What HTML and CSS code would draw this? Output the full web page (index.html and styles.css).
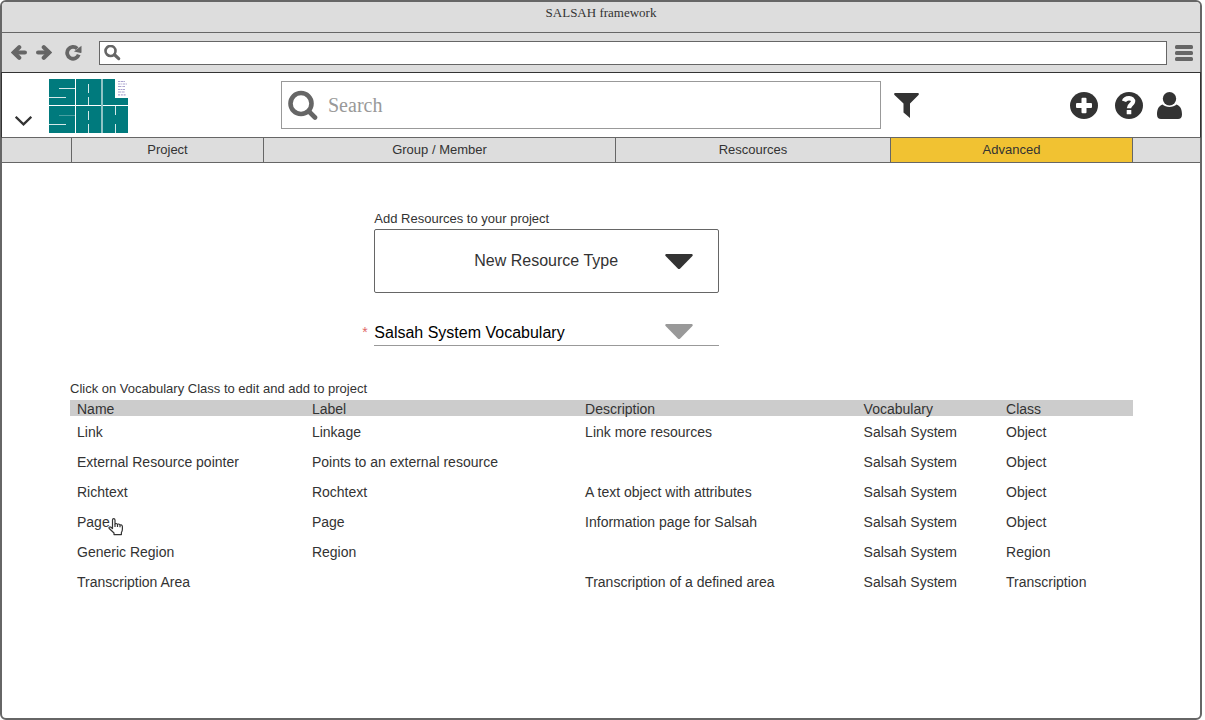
FILE: index.html
```html
<!DOCTYPE html>
<html lang="en">
<head>
<meta charset="utf-8">
<meta name="viewport" content="width=device-width, initial-scale=1">
<title>SALSAH framework</title>
<link rel="stylesheet" href="styles.css">
</head>
<body>
<div class="window">
  <div class="titlebar">SALSAH framework</div>

  <div class="toolbar">
    <button class="icon-button" type="button" aria-label="Back">
      <svg width="16" height="16" viewBox="0 0 16 16" fill="none" stroke="#666" stroke-width="4.200" stroke-linecap="round"><path d="M3.500 7.500H13.900"/><path d="M8.200 2.300 2.800 7.500l5.400 5.200"/></svg>
    </button>
    <button class="icon-button" type="button" aria-label="Forward">
      <svg width="16" height="16" viewBox="0 0 16 16" fill="none" stroke="#666" stroke-width="4.200" stroke-linecap="round"><path d="M12.500 7.500H2.100"/><path d="M7.800 2.300l5.400 5.200-5.400 5.200"/></svg>
    </button>
    <button class="icon-button reload" type="button" aria-label="Reload">
      <svg width="17" height="16" viewBox="0 0 17 16"><path d="M12.200 3.600A5.900 5.900 0 1 0 13.700 9.600" fill="none" stroke="#666" stroke-width="3.800"/><path d="M16.500.800v6.500q0 .7-.8.600L9 6.400z" fill="#666"/></svg>
    </button>
    <label class="address">
      <svg width="17" height="16" viewBox="0 0 17 16" fill="none" stroke="#666"><circle cx="6.500" cy="6" r="5" stroke-width="2.600"/><path d="M10.500 9.800l4.200 3.800" stroke-width="3.200" stroke-linecap="round"/></svg>
      <input class="address-input" type="text" aria-label="Address">
    </label>
    <button class="icon-button" type="button" aria-label="Browser menu">
      <svg width="18" height="16" viewBox="0 0 18 16" fill="#666"><rect width="18" height="4" rx="1.500"/><rect y="6" width="18" height="4" rx="1.500"/><rect y="12" width="18" height="4" rx="1.500"/></svg>
    </button>
  </div>

  <header class="header">
    <button class="icon-button expand" type="button" aria-label="Expand">
      <svg width="17" height="10" viewBox="0 0 17 10" fill="none" stroke="#333" stroke-width="2.300"><path d="M.7.800l7.800 7.500L16.300.800"/></svg>
    </button>
    <a class="logo" href="#" aria-label="SALSAH">
      <svg width="79" height="54" viewBox="0 0 79 54">
        <path fill="#007a7d" d="M0 0h66v19h13v35H0z"/>
        <g fill="#fff">
          <rect y="26" width="79" height="1"/>
          <rect x="26" width="1" height="54"/>
        </g>
        <g fill="#d5e9e9">
          <rect x="10" y="9" width="16" height="1"/>
          <rect y="18" width="17" height="1"/>
          <rect y="45" width="17" height="1"/>
          <rect x="39" y="5" width="1" height="9"/>
          <rect x="39" y="18" width="1" height="8"/>
          <rect x="39" y="32" width="1" height="9"/>
          <rect x="39" y="45" width="1" height="9"/>
          <rect x="66" y="27" width="1" height="9"/>
          <rect x="66" y="45" width="1" height="9"/>
        </g>
        <g fill="#8fc4c5">
          <rect x="52" width="2" height="54"/>
          <rect x="10" y="36" width="16" height="1" opacity=".5"/>
        </g>
        <g fill="none" stroke="#aaa3cf" stroke-width="1.200">
          <path d="M69 2.500h7" stroke-dasharray="2 .6 3 .5"/>
          <path d="M69 5h9" stroke-dasharray="2.500 .7 1 .7"/>
          <path d="M69 7.500h7" stroke-dasharray="3 .6 1 .5"/>
          <path d="M69 10.500h7" stroke-dasharray="2 .5"/>
          <path d="M69 13h7" stroke-dasharray="3 .6"/>
          <path d="M69 15.800h8" stroke-dasharray="2 .8"/>
        </g>
      </svg>
    </a>
    <label class="search">
      <svg width="31" height="30" viewBox="0 0 31 30" fill="none" stroke="#666"><circle cx="13" cy="13.500" r="10.500" stroke-width="4.600"/><path d="M21 21.500l6 6" stroke-width="4.600" stroke-linecap="round"/></svg>
      <input class="search-input" type="search" placeholder="Search" aria-label="Search">
    </label>
    <button class="icon-button filter" type="button" aria-label="Filter">
      <svg width="25" height="26" viewBox="0 0 25 26" fill="#333"><path d="M.8 1h23.400q1.200.8.300 2L16 11.500V26l-6.500-5.500v-9L.500 3Q-.4 1.800.800 1z"/></svg>
    </button>
    <button class="icon-button add" type="button" aria-label="Add">
      <svg width="28" height="27" viewBox="0 0 28 27"><ellipse cx="14" cy="13.500" rx="14" ry="13.500" fill="#333"/><g fill="#fff"><rect x="11.500" y="5.700" width="5" height="15.600" rx="1"/><rect x="6" y="11" width="16" height="5" rx="1"/></g></svg>
    </button>
    <button class="icon-button help" type="button" aria-label="Help">
      <svg width="28" height="27" viewBox="0 0 28 27"><ellipse cx="14" cy="13.500" rx="14" ry="13.500" fill="#333"/><path d="M9 9.300C10.500 5 18.600 5.200 18 9.800 17.600 12.500 14 12.600 14 16.300" stroke="#fff" stroke-width="4.400" fill="none"/><rect x="11.700" y="18" width="4.600" height="4.300" rx=".5" fill="#fff"/></svg>
    </button>
    <button class="icon-button" type="button" aria-label="Account">
      <svg width="26" height="27" viewBox="0 0 26 27" fill="#333"><circle cx="13.500" cy="6.700" r="6.700"/><path d="M6.500 12.500C9.700 15.800 17.300 15.800 20.500 12.500 25 14 26 18.500 26 22.500 26 25.500 24.500 27 22 27H5c-2.500 0-4-1.500-4-4.500C1 18.500 2 14 6.500 12.500z"/></svg>
    </button>
  </header>

  <nav class="tabs" aria-label="Main">
    <span class="tab"></span>
    <a class="tab" href="#">Project</a>
    <a class="tab" href="#">Group / Member</a>
    <a class="tab" href="#">Rescources</a>
    <a class="tab active" href="#" aria-current="page">Advanced</a>
    <span class="tab"></span>
  </nav>

  <main class="content">
    <form class="form">
      <label class="form-label" for="type">Add Resources to your project</label>
      <div class="picker">
        <select class="select boxed" id="type"><option>New Resource Type</option></select>
        <svg class="arrow" width="28" height="16" viewBox="0 0 28 16" fill="#333"><path d="M1.200 1h25.600q1.600.7.600 2L15.200 15.500q-1.200 1-2.400 0L.600 3Q-.4 1.700 1.200 1z"/></svg>
      </div>
      <label class="required" for="vocabulary" aria-label="Vocabulary, required">*</label>
      <div class="picker">
        <select class="select underlined" id="vocabulary"><option>Salsah System Vocabulary</option></select>
        <svg class="arrow" width="28" height="17" viewBox="0 0 28 17" fill="#999"><path d="M1.200 0h25.600q1.600.7.600 2L15.200 14.500q-1.200 1-2.400 0L.600 2Q-.4.700 1.200 0z"/></svg>
      </div>
    </form>

    <table class="classes">
      <caption>Click on Vocabulary Class to edit and add to project</caption>
      <colgroup><col class="col-name"><col class="col-label"><col class="col-description"><col class="col-vocabulary"><col></colgroup>
      <thead>
        <tr><th scope="col">Name</th><th scope="col">Label</th><th scope="col">Description</th><th scope="col">Vocabulary</th><th scope="col">Class</th></tr>
      </thead>
      <tbody>
        <tr><td>Link</td><td>Linkage</td><td>Link more resources</td><td>Salsah System</td><td>Object</td></tr>
        <tr><td>External Resource pointer</td><td>Points to an external resource</td><td></td><td>Salsah System</td><td>Object</td></tr>
        <tr><td>Richtext</td><td>Rochtext</td><td>A text object with attributes</td><td>Salsah System</td><td>Object</td></tr>
        <tr><td><span class="pointed">Page<svg class="cursor" width="16" height="18" viewBox="0 0 16 18" fill="#fff" stroke="#333" stroke-width="1.200" stroke-linejoin="round"><path d="M4.500 10.500V2q0-1.300 1.200-1.300T7 2v4.500q.2-1 1.200-1t1.300 1.200q.2-.8 1.200-.7t1.300 1.200q.2-.6 1.200-.4T14.400 8.500V11q0 2-1 3.500V16.600H6V15L1.500 10.800Q.6 9.700 1.300 9.100T3 9.200z"/><path d="M7 6.500v2.500M9.500 6.700v2.300M12 7.200v2"/></svg></span></td><td>Page</td><td>Information page for Salsah</td><td>Salsah System</td><td>Object</td></tr>
        <tr><td>Generic Region</td><td>Region</td><td></td><td>Salsah System</td><td>Region</td></tr>
        <tr><td>Transcription Area</td><td></td><td>Transcription of a defined area</td><td>Salsah System</td><td>Transcription</td></tr>
      </tbody>
    </table>
  </main>
</div>
</body>
</html>
```
FILE: styles.css
```css
* { box-sizing: border-box; }

body {
  margin: 0;
  background: #fff;
  color: #333;
  font: 14px/16px "Liberation Sans", Arial, sans-serif;
}

svg { display: block; flex: none; }

.window {
  display: flex;
  flex-direction: column;
  min-height: 100vh;
  margin-right: 3px;
  border: 2px solid #666;
  border-radius: 6px;
}

.titlebar {
  padding: 3px 0 11px;
  border-bottom: 1px solid #666;
  border-radius: 4px 4px 0 0;
  background: #ddd;
  font: 13px/16px "Liberation Serif", "Times New Roman", serif;
  text-align: center;
}

.icon-button {
  flex: none;
  padding: 0;
  border: 0;
  background: none;
}

.toolbar {
  display: flex;
  align-items: center;
  gap: 9px;
  padding: 8px 7px 7px 9px;
  background: #ddd;
}

.reload { margin-left: 4px; }

.address {
  display: flex;
  flex: 1;
  height: 24px;
  margin: 0 -1px 0 8px;
  padding: 3px 4px;
  border: 1px solid #666;
  background: #fff;
}

.address-input,
.search-input {
  flex: 1;
  min-width: 0;
  padding: 0;
  border: 0;
  outline: 0;
  background: none;
}

.header {
  display: flex;
  align-items: center;
  margin: 0 -1px;
  padding: 0 18px 0 13px;
  border: 1px solid #333;
  border-bottom-color: #666;
  background: #fff;
}

.expand { align-self: flex-end; margin-bottom: 11px; }

.logo { margin: 6px 0 4px 17px; }

.search {
  display: flex;
  align-items: center;
  flex: 1;
  gap: 9px;
  height: 48px;
  margin-left: 153px;
  padding: 0 6px;
  border: 1px solid #999;
}

.search-input {
  font: 20px/24px "Liberation Serif", "Times New Roman", serif;
}

.search-input::placeholder { color: #999; opacity: 1; }

.filter { margin-left: 13px; }
.add { margin-left: 151px; }
.help { margin: 0 13px 0 17px; }

.tabs {
  display: grid;
  grid-template-columns: 70fr 192fr 352fr 275fr 242fr 67fr;
  border-bottom: 1px solid #666;
  background: #ddd;
  font-size: 13px;
}

.tab {
  padding: 4px 0;
  border-right: 1px solid #666;
  color: #333;
  text-align: center;
  text-decoration: none;
}

.tab:last-child { border-right: 0; }
.active { background: #f1c232; }

.content {
  flex: 1;
  padding: 48px 67px 48px 68px;
}

.form {
  display: grid;
  grid-template-columns: 12px minmax(0, 345px);
  width: 34%;
  margin-left: 27.5%;
}

.form-label {
  grid-column: 2;
  margin-bottom: 2px;
  font-size: 13px;
}

.picker {
  display: grid;
  grid-column: 2;
  align-items: center;
}

.select,
.arrow { grid-area: 1 / 1; }

.arrow {
  justify-self: end;
  margin-right: 26px;
  pointer-events: none;
}

.select {
  width: 100%;
  appearance: none;
  border: 0;
  border-radius: 0;
  background: #fff;
  color: #333;
  font: 16px/20px "Liberation Sans", Arial, sans-serif;
}

.boxed {
  height: 64px;
  padding: 0 0 0 99px;
  border: 1px solid #666;
  border-radius: 2px;
}

.underlined {
  height: 27px;
  padding: 2px 0 0;
  border-bottom: 1px solid #999;
  color: #000;
}

.required {
  grid-column: 1;
  margin-top: 31px;
  color: #e06666;
  font-size: 14px;
}

.required + .picker { margin-top: 26px; }

.classes {
  width: 100%;
  margin-top: 35px;
  border-collapse: collapse;
  table-layout: fixed;
}

.classes caption {
  padding-bottom: 3px;
  font-size: 13px;
  text-align: left;
}

.col-name { width: 22.1%; }
.col-label { width: 25.7%; }
.col-description { width: 26.2%; }
.col-vocabulary { width: 13.4%; }

.classes th {
  padding: 2px 0 0 7px;
  background: #ccc;
  font-weight: 400;
  line-height: 14px;
  text-align: left;
}

.classes td {
  height: 30px;
  padding: 8px 0 6px 7px;
}

.pointed { position: relative; }

.cursor {
  position: absolute;
  top: 4px;
  left: 31px;
}
```
